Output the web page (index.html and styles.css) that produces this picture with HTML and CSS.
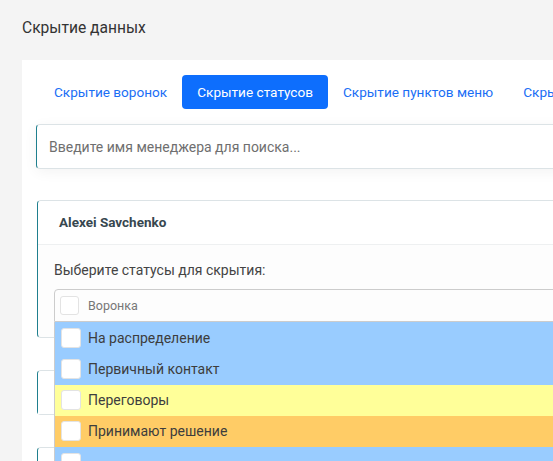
FILE: index.html
```html
<!DOCTYPE html>
<html lang="ru">
<head>
<meta charset="utf-8">
<title>Скрытие данных</title>
<link rel="stylesheet" href="styles.css">
</head>
<body>
<div class="page">
  <h1 class="title">Скрытие данных</h1>
  <div class="panel">
    <nav class="tabs">
      <a class="tab">Скрытие воронок</a>
      <a class="tab active">Скрытие статусов</a>
      <a class="tab">Скрытие пунктов меню</a>
      <a class="tab">Скрытие полей</a>
    </nav>
    <input class="search" type="text" placeholder="Введите имя менеджера для поиска...">
    <div class="cards">
      <div class="card">
        <div class="card-header">Alexei Savchenko</div>
        <div class="card-body">
          <div class="label">Выберите статусы для скрытия:</div>
          <div class="select">
            <span class="check"></span>
            <span class="placeholder">Воронка</span>
            <ul class="dropdown">
              <li class="opt blue"><span class="check"></span>На распределение</li>
              <li class="opt blue"><span class="check"></span>Первичный контакт</li>
              <li class="opt yellow"><span class="check"></span>Переговоры</li>
              <li class="opt orange"><span class="check"></span>Принимают решение</li>
              <li class="opt blue"><span class="check"></span></li>
            </ul>
          </div>
        </div>
      </div>
      <div class="card">
        <div class="card-header"></div>
      </div>
      <div class="card">
        <div class="card-header"></div>
      </div>
    </div>
  </div>
</div>
</body>
</html>
```

FILE: styles.css
```css
html, body {
  margin: 0;
  padding: 0;
  overflow: hidden;
  height: 100%;
}
body {
  background: #f4f4f4;
  font-family: Roboto, "Noto Sans", sans-serif;
  color: #333;
}
.page {
  padding-left: 22px;
}
.title {
  margin: 0;
  padding-top: 18px;
  height: 60px;
  box-sizing: border-box;
  font-size: 15.6px;
  line-height: 20px;
  font-weight: 400;
  color: #333;
}
.panel {
  width: 820px;
  background: #fff;
  padding: 15px 0 200px 14px;
  box-sizing: border-box;
}
.tabs {
  display: flex;
  padding-left: 3px;
  margin-bottom: 15px;
}
.tab {
  display: block;
  height: 34px;
  line-height: 34px;
  padding: 0 15px;
  border-radius: 4px;
  font-size: 13.6px;
  color: #1a6ef5;
  white-space: nowrap;
}
.tab.active {
  background: #0d6efd;
  color: #fff;
}
.search {
  display: block;
  width: 100%;
  height: 45px;
  box-sizing: border-box;
  margin: 0;
  border: 1px solid #dce3e6;
  border-left-color: #1f7f8e;
  border-radius: 4px;
  padding: 0 12px;
  font-family: inherit;
  font-size: 14px;
  color: #333;
  background: #fff;
  box-shadow: 0 3px 14px rgba(0, 0, 0, 0.05);
  outline: none;
}
.search::placeholder {
  color: #6f6f6f;
}
.cards {
  display: flex;
  flex-direction: column;
  gap: 32px;
  margin-top: 31px;
  margin-left: 1px;
}
.card {
  border: 1px solid #dce3e6;
  border-left-color: #1f7f8e;
  border-radius: 4px;
  background: #fdfdfd;
}
.card-header {
  height: 43px;
  line-height: 43px;
  padding-left: 21px;
  font-size: 13.5px;
  font-weight: 700;
  color: #37474f;
  background: #fff;
  border-bottom: 1px solid #eef0f1;
  border-radius: 4px 4px 0 0;
}
.card .card-header:last-child {
  border-bottom: 0;
}
.card-body {
  padding: 16px 0 15px 16px;
}
.label {
  font-size: 14px;
  line-height: 18px;
  color: #444;
  margin-bottom: 10px;
}
.select {
  position: relative;
  display: flex;
  align-items: center;
  height: 33px;
  box-sizing: border-box;
  border: 1px solid #ccc;
  border-radius: 4px 4px 0 0;
  padding-left: 5px;
  background: #fdfdfd;
}
.check {
  display: inline-block;
  width: 19px;
  height: 19px;
  box-sizing: border-box;
  border: 1px solid #e3e3e3;
  border-radius: 3px;
  background: #fff;
  flex: none;
}
.placeholder {
  margin-left: 9px;
  font-size: 12.5px;
  color: #777;
}
.dropdown {
  position: absolute;
  top: calc(100% + 1px);
  left: -1px;
  right: -1px;
  margin: 0;
  padding: 0;
  list-style: none;
  border-left: 1px solid #ccc;
  z-index: 5;
}
.opt {
  display: flex;
  align-items: center;
  height: 31.25px;
  padding-left: 6px;
  font-size: 14px;
  color: #3d3d3d;
}
.opt .check {
  width: 20px;
  height: 20px;
  margin-right: 7px;
}
.blue { background: #99ccff; }
.yellow { background: #ffff99; }
.orange { background: #ffcc66; }
```
